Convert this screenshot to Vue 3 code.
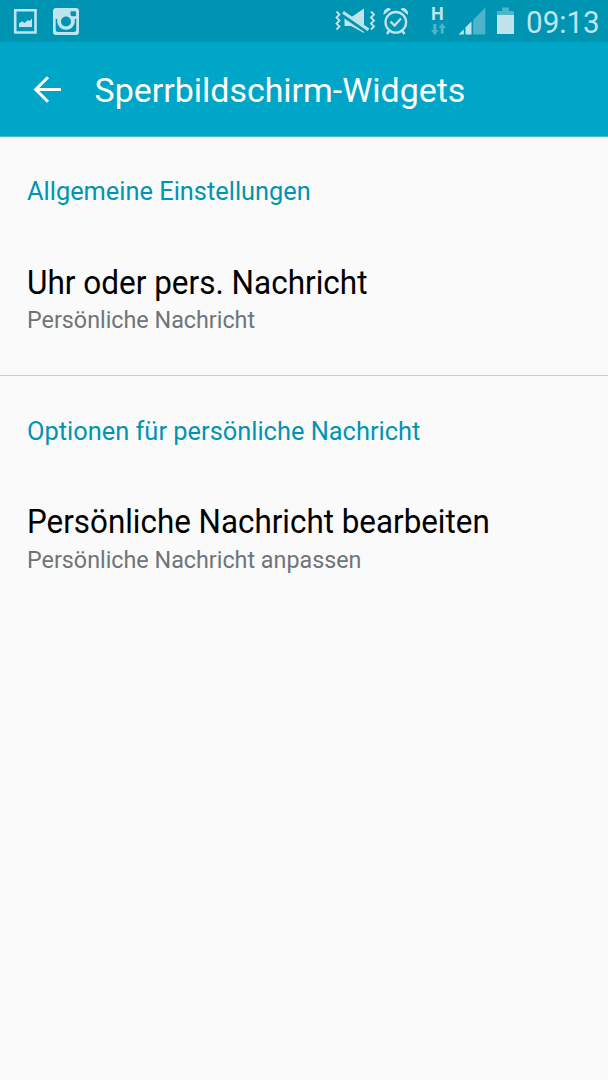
<script setup>
const sections = [
  { heading: 'Allgemeine Einstellungen', key: 'general', title: 'Uhr oder pers. Nachricht', summary: 'Persönliche Nachricht' },
  { heading: 'Optionen für persönliche Nachricht', key: 'message', title: 'Persönliche Nachricht bearbeiten', summary: 'Persönliche Nachricht anpassen' },
]
</script>

<template>
  <div class="screen">
    <div class="status">
      <svg class="picture" width="24" height="26" viewBox="13 8 24 26">
        <path d="M15.200 10.200h20.300v22.300H15.200z" fill="none" stroke="#bfe4ec" stroke-width="2.600" />
        <path d="M19 27v-3.500l3-2.200 2.500 1.700 3.500-3 1.500 1 2.500-2.500V27z" fill="#bfe4ec" />
      </svg>
      <svg class="camera" width="28" height="28" viewBox="52 7 28 28">
        <path fill="#bfe4ec" fill-rule="evenodd" d="M56 8h20q3 0 3 3v21q0 3-3 3H56q-3 0-3-3V11q0-3 3-3zM71.500 11.300q-1 0-1 1v3q0 1 1 1h3.500q1 0 1-1v-3q0-1-1-1zM55.700 19v10.500q0 2.500 2.500 2.500h15.600q2.500 0 2.500-2.500V19h-1.700a8.800 8.800 0 1 1-17.200 0z" />
        <circle cx="66" cy="21.500" r="7.800" fill="#bfe4ec" />
        <circle cx="66" cy="21.500" r="5" fill="#0094b3" />
      </svg>
      <span class="spacer"></span>
      <svg class="muted" width="42" height="26" viewBox="334 8 42 26">
        <path d="M336.500 11.500l3 3-3 3 3 3-3 3 3 3-3 3M371 11.500l3 3-3 3 3 3-3 3 3 3-3 3" fill="none" stroke="#bfe4ec" stroke-width="1.800" />
        <path d="M344.500 17h7l12.500-8.500v24.500l-13-7h-6.500z" fill="#bfe4ec" />
        <path d="M342 13.500l27 18.500" stroke="#0094b3" stroke-width="5.500" />
        <path d="M343 12.300l25.500 17.400" stroke="#bfe4ec" stroke-width="3" />
      </svg>
      <svg class="alarm" width="26" height="28" viewBox="383 7 26 28">
        <g fill="none" stroke="#bfe4ec">
          <circle cx="395.800" cy="22.300" r="10.300" stroke-width="2.300" />
          <path d="M390.500 21.500l4 4 6.500-7" stroke-width="2.300" />
          <path d="M389 31l-2 3M402.500 31l2 3" stroke-width="2.400" />
        </g>
        <path d="M383.500 15q-.5-5 4-7 2.500-.5 3.500 1.200zM408.100 15q.5-5-4-7-2.500-.5-3.500 1.200z" fill="#bfe4ec" />
      </svg>
      <svg class="data" width="18" height="36" viewBox="430 0 18 36">
        <text x="431.100" y="20" class="network">H</text>
        <path d="M433.300 24h3v6h2.300l-3.800 5.300-3.800-5.300h2.300zM440.700 33.500h3v-5.500h2.300l-3.800-5-3.800 5h2.300z" fill="#4db4ca" />
      </svg>
      <svg class="signal" width="28" height="28" viewBox="458 7 28 28">
        <path d="M458.500 34.500l5.300-5.300v5.300zM465.500 34.500v-7.300l6-5.800v13.100z" fill="#bfe4ec" />
        <path d="M473.200 34.500V20L485.300 7.500v27z" fill="#4db4ca" />
      </svg>
      <svg class="battery" width="18" height="28" viewBox="497 7 18 28">
        <path d="M502 7.500h7V11h5v4h-17v-4h5z" fill="#4db4ca" />
        <path d="M497 15h17v19h-17z" fill="#bfe4ec" />
      </svg>
      <span class="clock">09:13</span>
    </div>
    <header class="bar">
      <svg class="back" width="30" height="28" viewBox="33 76 30 28">
        <path d="M61 89.500H36M48 77.200L35.700 89.500 48 101.800" fill="none" stroke="#fff" stroke-width="3" />
      </svg>
      <h1>Sperrbildschirm-Widgets</h1>
    </header>
    <section v-for="s in sections" :key="s.key" :class="s.key">
      <h2><span>{{ s.heading }}</span></h2>
      <div class="item">
        <div class="title"><span>{{ s.title }}</span></div>
        <div class="summary"><span>{{ s.summary }}</span></div>
      </div>
    </section>
  </div>
</template>

<style>
html, body { margin: 0; background: #fafafa; }
</style>

<style scoped>
.screen { height: 1080px; overflow: hidden; background: #fafafa; font-family: Roboto, sans-serif; }
svg { display: block; flex: none; }
.status { height: 42px; display: flex; align-items: flex-start; background: #0094b3; }
.picture { margin: 8px 0 0 13px; }
.camera { margin: 7px 0 0 15px; }
.spacer { flex: 1; }
.muted { margin: 8px 7px 0 0; }
.alarm { margin: 7px 21px 0 0; }
.data { margin: 0 10px 0 0; }
.network { font: 700 18px Roboto, sans-serif; fill: #bfe4ec; }
.signal { margin: 7px 11px 0 0; }
.battery { margin-top: 7px; }
.clock { width: 83px; margin-left: 10px; flex: none; font-size: 31px; line-height: 45px; color: #bfe4ec; font-weight: 400; white-space: nowrap; transform: translateX(1px) scaleX(.955); transform-origin: 0 50%; }
.bar { box-sizing: border-box; height: 95px; display: flex; align-items: flex-start; background: #00a6c7; border-bottom: 1px solid #4dbdd3; }
.back { margin: 34px 0 0 33px; }
h1 { margin: 0 0 0 31px; font-size: 34px; font-weight: 400; line-height: 97px; color: #fff; white-space: nowrap; transform: translateX(.5px) scaleX(.998); transform-origin: 0 50%; }
section { box-sizing: border-box; height: 240px; padding: 38px 27px 0; white-space: nowrap; }
section span { display: inline-block; transform-origin: 0 50%; }
.general { height: 239px; border-bottom: 1px solid #ccc; }
h2 { margin: 0; height: 34px; line-height: 34px; font-size: 26px; font-weight: 400; color: #0094b3; }
h2 span { transform: scaleX(.977); }
.general h2 span { transform: translateY(-.6px) scaleX(.976); }
.item { padding-top: 54px; }
.title { height: 40px; font-size: 32.500px; line-height: 40px; color: #000; }
.title span { transform: scaleX(.969); }
.message .title span { transform: translateY(.3px) scaleX(.965); }
.summary { height: 34px; font-size: 24px; line-height: 34px; color: #707477; }
.summary span { transform: translateY(.2px) scaleX(.971); }
.message .summary span { transform: translateY(.6px) scaleX(.971); }
</style>
